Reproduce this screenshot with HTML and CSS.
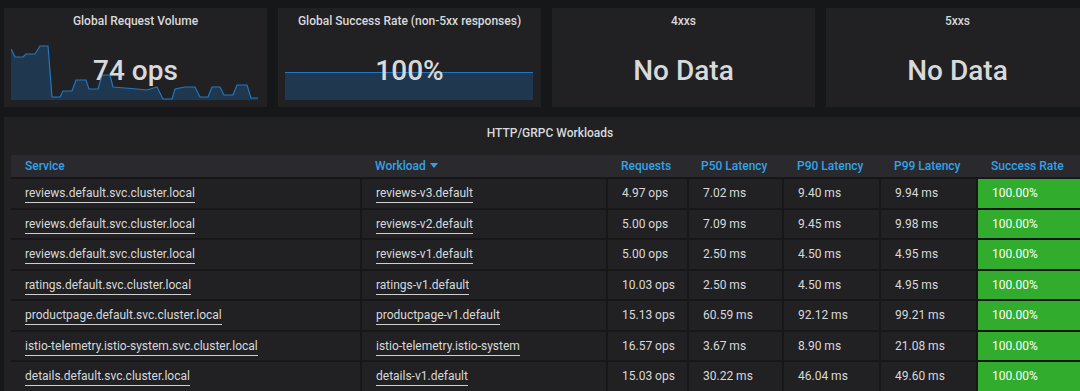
FILE: index.html
```html
<!DOCTYPE html>
<html>
<head>
<meta charset="utf-8">
<link rel="stylesheet" href="styles.css">
</head>
<body>
<div class="page">
  <div class="stats">
    <div class="panel stat">
      <div class="ptitle">Global Request Volume</div>
      <svg class="spark" viewBox="11 40 248 60" width="248" height="60" preserveAspectRatio="none">
        <path class="area" d="M11,49 L15,57 L23,57 L26,54 L35,54 L40,46 L48,46 L52,97 L60,97 L63,91 L72,91 L76,80 L86,80 L89,89 L98,89 L102,75 L110,75 L113,87 L137,89 L147,90 L157,87 L163,99 L172,99 L175,89 L185,87 L195,87 L200,97 L208,97 L212,87 L220,87 L224,95 L233,95 L237,85 L247,85 L251,98 L258,98 L258,100 L11,100 Z"/>
        <path class="line" d="M11,49 L15,57 L23,57 L26,54 L35,54 L40,46 L48,46 L52,97 L60,97 L63,91 L72,91 L76,80 L86,80 L89,89 L98,89 L102,75 L110,75 L113,87 L137,89 L147,90 L157,87 L163,99 L172,99 L175,89 L185,87 L195,87 L200,97 L208,97 L212,87 L220,87 L224,95 L233,95 L237,85 L247,85 L251,98 L258,98"/>
      </svg>
      <div class="value">74 ops</div>
    </div>
    <div class="panel stat">
      <div class="ptitle">Global Success Rate (non-5xx responses)</div>
      <svg class="spark" viewBox="11 40 248 60" width="248" height="60" preserveAspectRatio="none">
        <path class="area" d="M11,72.5 L259,72.5 L259,100 L11,100 Z"/>
        <path class="line" d="M11,72.5 L259,72.5"/>
      </svg>
      <div class="value">100%</div>
    </div>
    <div class="panel stat">
      <div class="ptitle">4xxs</div>
      <div class="value">No Data</div>
    </div>
    <div class="panel stat">
      <div class="ptitle">5xxs</div>
      <div class="value">No Data</div>
    </div>
  </div>

  <div class="panel tpanel">
    <div class="ttitle">HTTP/GRPC Workloads</div>
    <table class="wl">
      <thead>
        <tr>
          <th class="c-svc">Service</th>
          <th class="c-wl">Workload <span class="caret"></span></th>
          <th class="c-req">Requests</th>
          <th class="c-p50">P50 Latency</th>
          <th class="c-p90">P90 Latency</th>
          <th class="c-p99">P99 Latency</th>
          <th class="c-sr">Success Rate</th>
        </tr>
      </thead>
      <tbody>
        <tr><td><a>reviews.default.svc.cluster.local</a></td><td><a>reviews-v3.default</a></td><td>4.97 ops</td><td>7.02 ms</td><td>9.40 ms</td><td>9.94 ms</td><td class="ok">100.00%</td></tr>
        <tr><td><a>reviews.default.svc.cluster.local</a></td><td><a>reviews-v2.default</a></td><td>5.00 ops</td><td>7.09 ms</td><td>9.45 ms</td><td>9.98 ms</td><td class="ok">100.00%</td></tr>
        <tr><td><a>reviews.default.svc.cluster.local</a></td><td><a>reviews-v1.default</a></td><td>5.00 ops</td><td>2.50 ms</td><td>4.50 ms</td><td>4.95 ms</td><td class="ok">100.00%</td></tr>
        <tr><td><a>ratings.default.svc.cluster.local</a></td><td><a>ratings-v1.default</a></td><td>10.03 ops</td><td>2.50 ms</td><td>4.50 ms</td><td>4.95 ms</td><td class="ok">100.00%</td></tr>
        <tr><td><a>productpage.default.svc.cluster.local</a></td><td><a>productpage-v1.default</a></td><td>15.13 ops</td><td>60.59 ms</td><td>92.12 ms</td><td>99.21 ms</td><td class="ok">100.00%</td></tr>
        <tr><td><a>istio-telemetry.istio-system.svc.cluster.local</a></td><td><a>istio-telemetry.istio-system</a></td><td>16.57 ops</td><td>3.67 ms</td><td>8.90 ms</td><td>21.08 ms</td><td class="ok">100.00%</td></tr>
        <tr><td><a>details.default.svc.cluster.local</a></td><td><a>details-v1.default</a></td><td>15.03 ops</td><td>30.22 ms</td><td>46.04 ms</td><td>49.60 ms</td><td class="ok">100.00%</td></tr>
      </tbody>
    </table>
  </div>
</div>
</body>
</html>
```

FILE: styles.css
```css
html, body {
  margin: 0;
  padding: 0;
  background: #161719;
  overflow: hidden;
}
body {
  font-family: Roboto, "Liberation Sans", sans-serif;
  color: #d8d9da;
}
.page {
  width: 1085px;
  padding: 8px 0 0 4px;
}
.stats {
  display: flex;
  gap: 11px;
  width: 1120px;
}
.panel {
  background: #212124;
}
.stat {
  position: relative;
  flex: 0 0 263px;
  height: 99px;
  display: flex;
  flex-direction: column;
  align-items: center;
}
.ptitle {
  margin-top: 5px;
  font-size: 12px;
  font-weight: 500;
  line-height: 17px;
  position: relative;
  z-index: 1;
}
.value {
  margin-top: 24px;
  font-size: 28px;
  font-weight: 500;
  line-height: 34px;
  position: relative;
  z-index: 1;
}
.spark {
  position: absolute;
  left: 7px;
  bottom: 7px;
  display: block;
}
.spark .area {
  fill: rgba(31, 118, 189, 0.28);
  stroke: none;
}
.spark .line {
  fill: none;
  stroke: #1f78c1;
  stroke-width: 1.2;
}
.tpanel {
  margin-top: 10px;
  width: 1085px;
  height: 300px;
  padding: 0 0 0 7px;
  box-sizing: border-box;
}
.ttitle {
  text-align: center;
  font-size: 12px;
  font-weight: 500;
  line-height: 17px;
  padding: 8px 0 13px;
}
.wl {
  border-collapse: collapse;
  table-layout: fixed;
  width: 1071px;
  font-size: 12px;
}
.wl th, .wl td {
  box-sizing: border-box;
}
.wl th {
  background: #2a2a2e;
  color: #33a2e5;
  font-weight: 500;
  font-size: 12px;
  text-align: left;
  height: 23px;
  padding: 0 0 1px 14px;
  line-height: 20px;
  border-bottom: 2px solid #171719;
  white-space: nowrap;
}
.wl th.c-svc { width: 350px; }
.wl th.c-wl { width: 246px; }
.wl th.c-req { width: 81px; }
.wl th.c-p50 { width: 95px; }
.wl th.c-p90 { width: 97px; }
.wl th.c-p99 { width: 97px; }
.wl th.c-p50 { padding-left: 13px; }
.caret {
  display: inline-block;
  width: 0;
  height: 0;
  border-left: 4px solid transparent;
  border-right: 4px solid transparent;
  border-top: 5px solid #33a2e5;
  vertical-align: 2px;
  margin-left: 1px;
}
.wl td {
  height: 30.5px;
  padding: 0 0 0 14px;
  border-right: 2px solid #171719;
  border-bottom: 2px solid #171719;
  white-space: nowrap;
  overflow: hidden;
}
.wl td a {
  color: #d8d9da;
  text-decoration: none;
  border-bottom: 1px solid #cfcfcf;
  padding-bottom: 2px;
}
.wl td.ok {
  background: rgb(50, 172, 45);
  color: #fff;
}
```
